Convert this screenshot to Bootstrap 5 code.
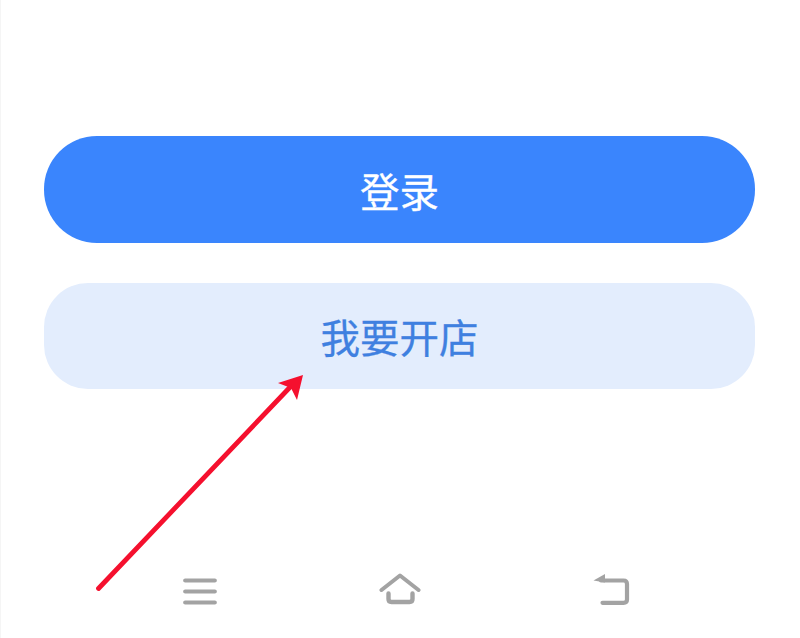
<!DOCTYPE html>
<html lang="zh">
<head>
<meta charset="utf-8">
<title>登录</title>
<link href="https://cdn.jsdelivr.net/npm/bootstrap@5.3.0/dist/css/bootstrap.min.css" rel="stylesheet">
<style>
html, body { height: 100%; }
body { background: #fff; font-family: "Noto Sans CJK SC", "Liberation Sans", sans-serif; overflow: hidden; }
.screen { height: 638px; position: relative; padding: 136px 44px 33px 44px; border-left: 1px solid #f5f5f5; }
.screen .pill { height: 106.5px; width: 711px; margin-left: -1px; font-size: 39.5px; line-height: 1; padding: 0; border: 0; display: flex; align-items: center; justify-content: center; -webkit-text-stroke: 0.3px currentColor; }
.pill-login { background: #3a85fd; color: #fff; border-radius: 53px; }
.pill-open { background: #e3edfd; color: #3f80e0; border-radius: 44px; margin-top: 40px; }
.pill-login:hover { background: #3a85fd; color: #fff; }
.pill-open:hover { background: #e3edfd; color: #3f80e0; }
.softkeys { height: 32px; padding-left: 138px; }
.softkeys svg { display: block; flex: none; }
.key-home { margin-left: 162px; }
.key-back { margin-left: 172px; }
.pointer { position: absolute; left: 0; top: 0; pointer-events: none; }
</style>
</head>
<body>
<main class="screen d-flex flex-column">
  <button type="button" class="btn pill pill-login">登录</button>
  <button type="button" class="btn pill pill-open">我要开店</button>
  <nav class="softkeys mt-auto d-flex align-items-end">
    <svg width="34" height="27" viewBox="0 0 34 27" fill="none" stroke="#a3a3a3" stroke-width="4.2" stroke-linecap="round"><path d="M2.200 2.500H31.800M2.200 13.500H31.800M2.200 24.500H31.800"/></svg>
    <svg class="key-home" width="42" height="32" viewBox="0 0 42 32" fill="none" stroke="#a3a3a3" stroke-linecap="round" stroke-linejoin="round"><path stroke-width="4" d="M2.500 17 21 2.500 39.500 17"/><path stroke-width="4.400" d="M9.500 20.500V26Q9.500 29 12.500 29H30.500Q33.500 29 33.500 26V20.500"/></svg>
    <svg class="key-back" width="38" height="31" viewBox="0 0 38 31" fill="none"><path stroke="#a3a3a3" stroke-width="4.200" stroke-linecap="round" stroke-linejoin="round" d="M8 6.500H30.500Q34 6.500 34 10V25.500Q34 28.800 30.500 28.800H9.500"/><path fill="#a3a3a3" d="M0.500 6.500 12 0V8.500Z"/></svg>
  </nav>
  <svg class="pointer" width="800" height="638" viewBox="0 0 800 638" fill="none"><path stroke="#f5102e" stroke-width="4.800" stroke-linecap="round" d="M97.500 588.500 293 383"/><path fill="#f5102e" d="M302 375 277 383 290 388 296 400Z"/></svg>
</main>
<script src="https://cdn.jsdelivr.net/npm/bootstrap@5.3.0/dist/js/bootstrap.bundle.min.js"></script>
</body>
</html>
